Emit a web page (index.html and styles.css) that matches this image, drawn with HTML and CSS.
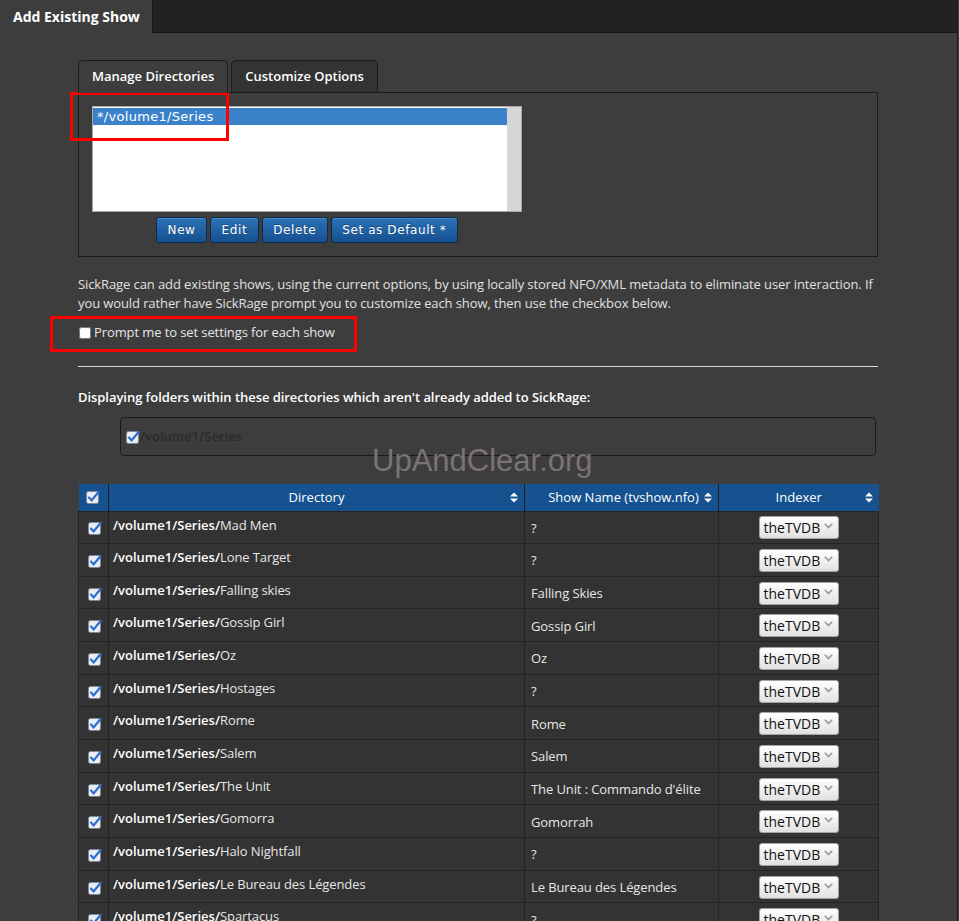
FILE: index.html
```html
<!DOCTYPE html>
<html>
<head>
<meta charset="utf-8">
<title>Add Existing Show</title>
<link rel="stylesheet" href="styles.css">
</head>
<body>
<div class="page">
  <div class="topbar">
    <div class="maintab">Add Existing Show</div>
    <div class="topfill"></div>
  </div>

  <div class="content">
    <div class="tabs">
      <div class="tab active">Manage Directories</div>
      <div class="tab">Customize Options</div>
    </div>
    <div class="panel">
      <div class="listbox">
        <div class="options">
          <div class="option selected">*/volume1/Series</div>
        </div>
        <div class="scrolltrack"></div>
      </div>
      <div class="buttons">
        <button class="btn">New</button>
        <button class="btn">Edit</button>
        <button class="btn">Delete</button>
        <button class="btn">Set as Default *</button>
      </div>
    </div>

    <p class="intro">SickRage can add existing shows, using the current options, by using locally stored NFO/XML metadata to eliminate user interaction. If you would rather have SickRage prompt you to customize each show, then use the checkbox below.</p>

    <label class="prompt"><input type="checkbox" class="cb"> Prompt me to set settings for each show</label>

    <hr class="sep">

    <div class="heading">Displaying folders within these directories which aren't already added to SickRage:</div>

    <div class="dirbox">
      <span class="chk"><svg width="14" height="14" viewBox="0 0 14 14"><rect x="0.5" y="1.5" width="12" height="12" rx="2" fill="#e9eef4" stroke="#7d8894"/><path d="M3 7.6l2.6 2.8L12.6 2" stroke="#2b6ccc" stroke-width="2.2" fill="none" stroke-linecap="round"/></svg></span><span class="dirname">/volume1/Series</span>
    </div>

    <table class="shows">
      <thead>
        <tr>
          <th class="c-chk"><span class="chk"><svg width="14" height="14" viewBox="0 0 14 14"><rect x="0.5" y="1.5" width="12" height="12" rx="2" fill="#e9eef4" stroke="#7d8894"/><path d="M3 7.6l2.6 2.8L12.6 2" stroke="#2b6ccc" stroke-width="2.2" fill="none" stroke-linecap="round"/></svg></span></th>
          <th class="c-dir">Directory<span class="sort"><svg width="8" height="11" viewBox="0 0 8 11"><path d="M0 4.5L4 0.5L8 4.5Z M0 6.5L4 10.5L8 6.5Z" fill="#fff"/></svg></span></th>
          <th class="c-name">Show Name (tvshow.nfo)<span class="sort"><svg width="8" height="11" viewBox="0 0 8 11"><path d="M0 4.5L4 0.5L8 4.5Z M0 6.5L4 10.5L8 6.5Z" fill="#fff"/></svg></span></th>
          <th class="c-idx">Indexer<span class="sort"><svg width="8" height="11" viewBox="0 0 8 11"><path d="M0 4.5L4 0.5L8 4.5Z M0 6.5L4 10.5L8 6.5Z" fill="#fff"/></svg></span></th>
        </tr>
      </thead>
      <tbody id="rows">
      </tbody>
    </table>
  </div>

  <div class="mark box1"></div>
  <div class="mark box2"></div>
  <div class="watermark">UpAndClear.org</div>
</div>
<script>
var shows = [
  ["Mad Men", "?"],
  ["Lone Target", "?"],
  ["Falling skies", "Falling Skies"],
  ["Gossip Girl", "Gossip Girl"],
  ["Oz", "Oz"],
  ["Hostages", "?"],
  ["Rome", "Rome"],
  ["Salem", "Salem"],
  ["The Unit", "The Unit : Commando d'élite"],
  ["Gomorra", "Gomorrah"],
  ["Halo Nightfall", "?"],
  ["Le Bureau des Légendes", "Le Bureau des Légendes"],
  ["Spartacus", "?"]
];
var chk = '<span class="chk"><svg width="14" height="14" viewBox="0 0 14 14"><rect x="0.5" y="1.5" width="12" height="12" rx="2" fill="#e9eef4" stroke="#7d8894"/><path d="M3 7.6l2.6 2.8L12.6 2" stroke="#2b6ccc" stroke-width="2.2" fill="none" stroke-linecap="round"/></svg></span>';
var sel = '<span class="select">theTVDB<svg class="chev" width="9" height="6" viewBox="0 0 9 6"><path d="M0.8 0.8L4.5 4.5L8.2 0.8" stroke="#999" stroke-width="1.6" fill="none"/></svg></span>';
var html = "";
shows.forEach(function (s) {
  html += '<tr><td class="c-chk">' + chk + '</td><td class="c-dir"><b>/volume1/Series/</b>' + s[0] + '</td><td class="c-name">' + s[1] + '</td><td class="c-idx">' + sel + '</td></tr>';
});
document.getElementById("rows").innerHTML = html;
</script>
</body>
</html>
```

FILE: styles.css
```css
html, body {
  margin: 0;
  padding: 0;
  background: #3d3d3d;
}
body {
  font-family: "Open Sans", "Liberation Sans", sans-serif;
  font-size: 13px;
  line-height: 19px;
  color: #e0e0e0;
  letter-spacing: -0.1px;
}
.page {
  position: relative;
  width: 957px;
  min-height: 921px;
  border-right: 1px solid #1c1c1c;
  overflow: hidden;
}
.topbar {
  display: flex;
  height: 33px;
  background: #222;
  width: 959px;
}
.maintab {
  width: 139px;
  padding-left: 13px;
  background: #3d3d3d;
  border-right: 1px solid #151515;
  color: #fff;
  font-weight: bold;
  font-size: 14px;
  line-height: 33px;
  letter-spacing: 0;
}
.topfill {
  flex: 1;
  height: 32px;
  border-bottom: 1px solid #151515;
}
.content {
  width: 800px;
  margin-left: 78px;
  padding-bottom: 40px;
}
.tabs {
  display: flex;
  gap: 3px;
  margin-top: 27px;
  position: relative;
  z-index: 1;
}
.tab {
  height: 31px;
  padding: 0 13px;
  border: 1px solid #1c1c1c;
  border-bottom: none;
  border-radius: 5px 5px 0 0;
  background: #333;
  color: #fff;
  font-weight: 600;
  font-size: 13px;
  line-height: 31px;
  letter-spacing: 0;
}
.tab.active {
  background: #3d3d3d;
  height: 32px;
  margin-bottom: -1px;
}
.panel {
  border: 1px solid #1c1c1c;
  padding: 13px;
  display: flex;
  flex-direction: column;
  align-items: flex-start;
}
.listbox {
  width: 428px;
  height: 104px;
  border: 1px solid #a9a9a9;
  background: #fff;
  display: flex;
}
.options {
  flex: 1;
  padding-top: 1px;
}
.option {
  font-family: "DejaVu Sans", Verdana, sans-serif;
  font-size: 13px;
  line-height: 17px;
  padding-left: 4px;
  color: #000;
  letter-spacing: 0.3px;
}
.option.selected {
  background: #3b82cb;
  color: #fff;
}
.scrolltrack {
  width: 14px;
  background: #d6d6d6;
}
.buttons {
  display: flex;
  gap: 3px;
  margin-top: 5px;
  width: 430px;
  justify-content: center;
}
.btn {
  height: 26px;
  padding: 0 10.5px;
  border: 1px solid #0b2a4c;
  border-radius: 3px;
  background: linear-gradient(#2d72b8, #15508f);
  color: #fff;
  font-family: "DejaVu Sans", Verdana, sans-serif;
  font-size: 12px;
  letter-spacing: 0.6px;
  text-shadow: 0 -1px 0 rgba(0,0,0,0.3);
  box-shadow: inset 0 1px 0 rgba(255,255,255,0.15);
}
.intro {
  margin: 18px 0 0 0;
  color: #e0e0e0;
}
.prompt {
  display: flex;
  align-items: center;
  margin-top: 10px;
  color: #e6e6e6;
}
.cb {
  width: 12px;
  height: 12px;
  margin: 0 3px 0 1px;
}
.sep {
  margin: 24px 0 0 0;
  border: none;
  border-top: 1px solid #d8d8d8;
  height: 0;
}
.heading {
  margin-top: 21px;
  font-weight: 600;
  color: #fff;
  letter-spacing: -0.05px;
}
.dirbox {
  margin: 10px 2px 0 42px;
  height: 37px;
  border: 1px solid #1a1a1a;
  border-radius: 4px;
  display: flex;
  align-items: center;
  padding-left: 5px;
}
.dirname {
  font-weight: 600;
  color: #2a2a2a;
  letter-spacing: 0;
}
.chk {
  display: inline-flex;
  width: 14px;
  height: 14px;
}
.shows {
  margin-top: 28px;
  width: 800px;
  border-collapse: collapse;
  table-layout: fixed;
}
.shows th, .shows td {
  box-sizing: border-box;
}
.shows th {
  background: #15528f;
  color: #fff;
  font-weight: normal;
  height: 27px;
  padding: 0;
  border-left: 1px solid #1d1d1d;
  position: relative;
  text-align: center;
  vertical-align: middle;
  letter-spacing: 0;
}
.shows th:first-child {
  border-left: none;
}
.shows th.c-name {
  padding-left: 4px;
}
.sort {
  position: absolute;
  right: 6px;
  top: 8px;
  display: flex;
}
.c-chk {
  width: 30px;
}
.c-dir {
  width: 416px;
}
.c-name {
  width: 194px;
}
.c-idx {
  width: 160px;
}
.shows th.c-chk .chk {
  vertical-align: middle;
  margin-top: -3px;
}
.shows tbody tr {
  height: 32.67px;
}
.shows td {
  background: #333;
  border: 1px solid #232323;
  padding: 0;
  color: #e6e6e6;
  vertical-align: middle;
}
.shows td.c-chk {
  text-align: center;
  padding-left: 2px;
}
.shows td.c-chk .chk {
  vertical-align: middle;
}
.shows td.c-dir {
  vertical-align: top;
  padding: 4px 0 0 4px;
}
.shows td.c-dir b {
  font-weight: 600;
  color: #fff;
  letter-spacing: 0;
}
.shows td.c-name {
  padding: 2px 0 0 6px;
}
.shows td.c-idx {
  text-align: center;
  padding-top: 1px;
}
.select {
  display: inline-flex;
  align-items: center;
  gap: 4px;
  box-sizing: border-box;
  height: 23px;
  width: 80px;
  padding: 0 0 0 4px;
  border: 1px solid #a3a3a3;
  border-radius: 3px;
  background: linear-gradient(#ffffff, #e1e1e1);
  color: #111;
  font-size: 14px;
  line-height: 21px;
  letter-spacing: 0;
  vertical-align: middle;
}
.chev {
  margin-top: -3px;
}
.mark {
  position: absolute;
  border: 3px solid #ff0000;
  box-sizing: border-box;
}
.box1 {
  left: 70px;
  top: 92px;
  width: 159px;
  height: 49px;
}
.box2 {
  left: 50px;
  top: 316px;
  width: 307px;
  height: 36px;
}
.watermark {
  position: absolute;
  left: 372px;
  top: 445px;
  font-family: "Liberation Sans", Arial, sans-serif;
  font-size: 31px;
  line-height: 31px;
  color: #7a7373;
  letter-spacing: 0;
  pointer-events: none;
}
```
